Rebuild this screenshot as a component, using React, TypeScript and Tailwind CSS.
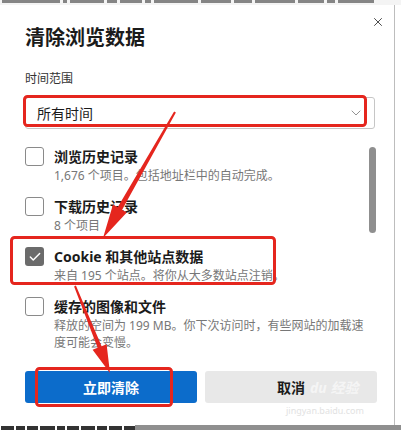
import { X, ChevronDown, Check } from "lucide-react";

type Item = { title: string; desc: string[]; checked?: boolean };

const items: Item[] = [
  { title: "浏览历史记录", desc: ["1,676 个项目。包括地址栏中的自动完成。"] },
  { title: "下载历史记录", desc: ["8 个项目"] },
  { title: "Cookie 和其他站点数据", desc: ["来自 195 个站点。将你从大多数站点注销。"], checked: true },
  {
    title: "缓存的图像和文件",
    desc: ["释放的空间为 199 MB。你下次访问时，有些网站的加载速", "度可能会变慢。"],
  },
];

const font = "font-['Noto_Sans','Noto_Sans_CJK_SC',sans-serif]";

// bits of the page text peeking out above / below the dialog
const topBits = [58, 4, 34, 10, 22, 6, 44, 30, 18, 40, 26, 8, 36];
const bottomBits = [14, 10, 12, 16, 9, 13, 15, 11, 14, 12];

const Row = ({ item }: { item: Item }) => (
  <div className="flex gap-[10px]">
    {item.checked ? (
      <div className="w-[19px] h-[19px] shrink-0 rounded-[3px] bg-[#6b6b6b] flex items-center justify-center">
        <Check className="w-[14px] h-[14px] text-white" strokeWidth={2.5} />
      </div>
    ) : (
      <div className="w-[19px] h-[19px] shrink-0 rounded-[3px] border border-[#8a8a8a] bg-white" />
    )}
    <div className="flex flex-col">
      <div className="text-[14px] leading-[20px] font-bold text-[#1b1b1b] whitespace-nowrap">
        {item.title}
      </div>
      {item.desc.map((d) => (
        <div key={d} className="text-[12px] leading-[17px] text-[#777] whitespace-nowrap">
          {d}
        </div>
      ))}
    </div>
  </div>
);

export default function App() {
  return (
    <div className={`relative w-[401px] h-[430px] overflow-hidden bg-white ${font}`}>
      {/* page behind the dialog */}
      <div className="h-[5px] bg-[#f4f4f4] flex items-start gap-[3px] pl-[2px]">
        {topBits.map((w, i) => (
          <div key={i} className="h-[3px] bg-[#555]/70" style={{ width: w }} />
        ))}
      </div>

      <div className="flex h-[420px]">
        <div className="relative w-[395px] h-full bg-white border-r border-[#bdbdbd] pl-[25px] pt-[19px]">
          <button className="absolute top-[10px] right-[9px] text-[#333]">
            <X className="w-[14px] h-[14px]" strokeWidth={1.5} />
          </button>

          <div className="text-[20px] leading-[28px] font-bold text-[#1b1b1b]">清除浏览数据</div>

          <div className="mt-[19px] text-[12px] leading-[16px] text-[#333]">时间范围</div>

          <div className="mt-[10px] w-[350px] h-[32px] border border-[#c6c6c6] rounded-[3px] flex items-center justify-between pl-[11px] pr-[10px]">
            <span className="text-[14px] text-[#1b1b1b]">所有时间</span>
            <ChevronDown className="w-[16px] h-[16px] text-[#777]" strokeWidth={1.2} />
          </div>

          <div className="mt-[18px] flex w-[351px]">
            <div className="flex-1 flex flex-col gap-[13px]">
              {items.map((it) => (
                <Row key={it.title} item={it} />
              ))}
            </div>
            <div className="w-[7px] h-[86px] rounded-full bg-[#8f8f8f]" />
          </div>

          <div className="mt-[20px] flex gap-[8px] w-[352px]">
            <button className="flex-1 h-[32px] rounded-[3px] bg-[#0c6ccb] text-white text-[14px] font-bold">
              立即清除
            </button>
            <button className="flex-1 h-[32px] rounded-[3px] bg-[#e8e8e8] text-[#1b1b1b] text-[14px] font-bold">
              取消
            </button>
          </div>

          {/* watermark */}
          <div className="absolute left-[310px] top-[374px] flex flex-col items-start pointer-events-none">
            <div className="text-[14px] leading-[18px] font-bold text-white/60 italic">du 经验</div>
            <div className="text-[9px] leading-[11px] text-[#e2e2e2] mt-[8px] -ml-[24px]">jingyan.baidu.com</div>
          </div>
        </div>
        <div className="flex-1 bg-white" />
      </div>

      <div className="h-[5px] bg-[#8f8f8f] flex">
        <div className="bg-white w-[135px] flex items-end gap-[2px] pl-[1px]">
          {bottomBits.map((w, i) => (
            <div key={i} className="h-[4px] bg-[#333]" style={{ width: w }} />
          ))}
        </div>
      </div>

      {/* red annotations */}
      <svg className="absolute inset-0 pointer-events-none" width="401" height="430" viewBox="0 0 401 430">
        <g fill="none" stroke="#e5261e" strokeWidth="3">
          <rect x="24.5" y="96.5" width="341" height="29" rx="3" />
          <rect x="11.5" y="237.5" width="263" height="46" rx="3" />
          <rect x="36.5" y="368.5" width="135" height="37" rx="3" />
        </g>
        <g fill="#e5261e">
          <polygon points="175.9,112.5 122.1,209.7 126.8,212.5 103,238 113,204.5 117.7,207.3 174.1,111.5" />
          <polygon points="75.9,285.6 101.6,346.2 106.6,344.2 110,373 92.6,349.8 97.6,347.8 74.1,286.4" />
        </g>
      </svg>
    </div>
  );
}
